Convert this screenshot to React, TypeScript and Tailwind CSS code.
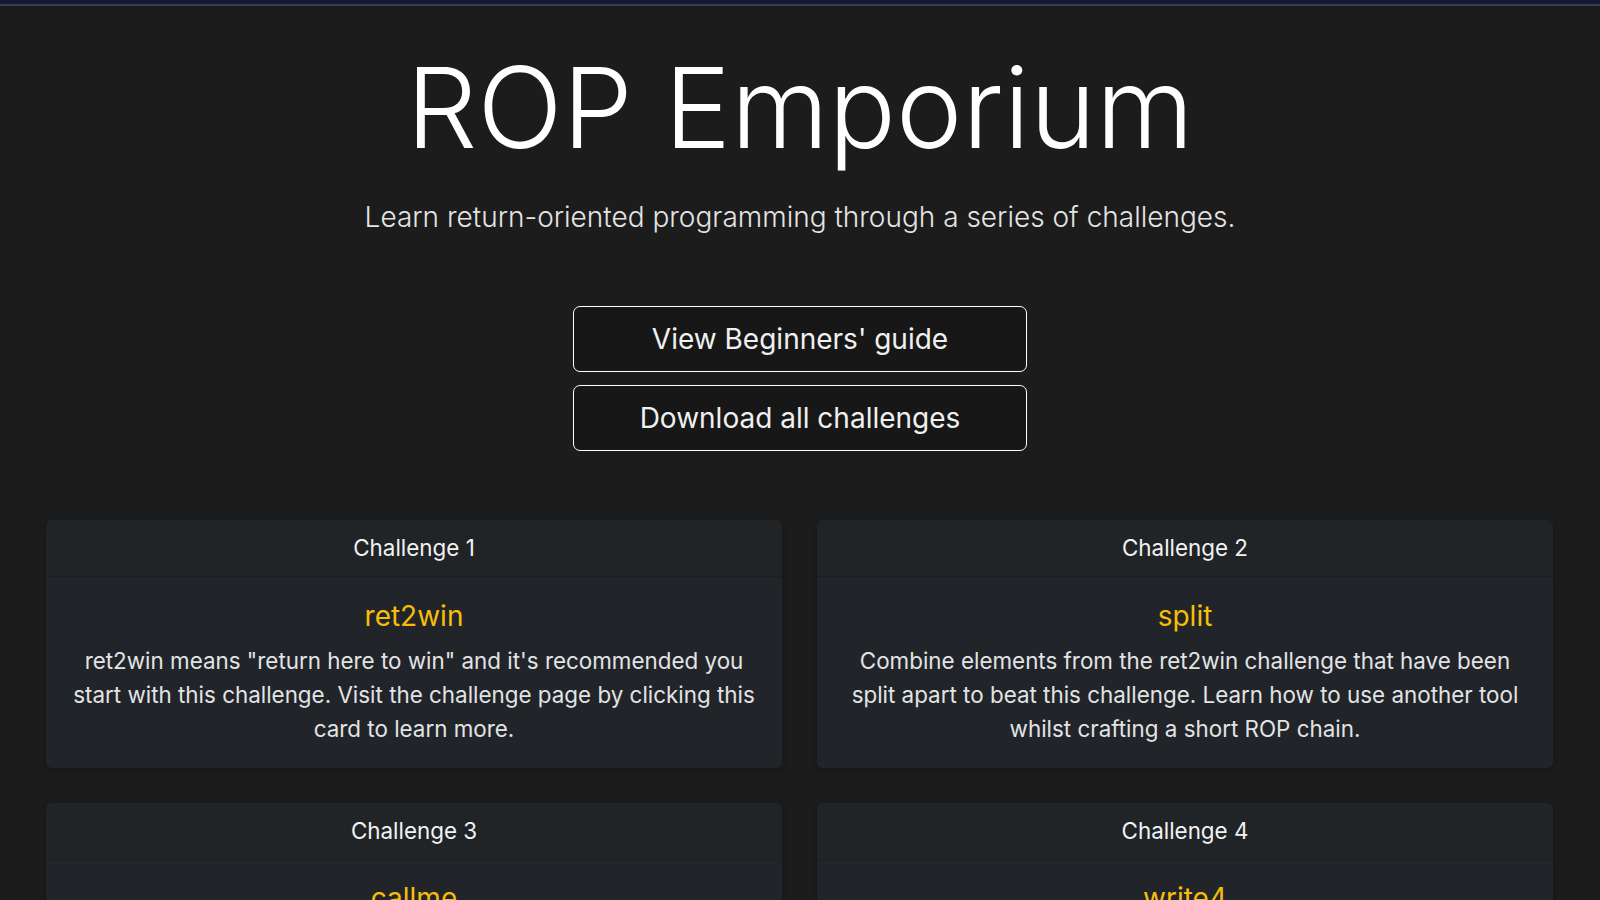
import React from "react";

const cards = [
  {
    n: 1,
    title: "ret2win",
    desc: "ret2win means \"return here to win\" and it's recommended you start with this challenge. Visit the challenge page by clicking this card to learn more.",
  },
  {
    n: 2,
    title: "split",
    desc: "Combine elements from the ret2win challenge that have been split apart to beat this challenge. Learn how to use another tool whilst crafting a short ROP chain.",
  },
  {
    n: 3,
    title: "callme",
    desc: "Reliably make consecutive calls to imported functions. Use some new techniques and learn about the Procedure Linkage Table.",
  },
  {
    n: 4,
    title: "write4",
    desc: "Our first foray into proper gadget use. A useful function is still present, but we'll need to write a string into memory somehow.",
  },
  {
    n: 5,
    title: "badchars",
    desc: "Learn to deal with \"bad characters\" that break your ROP chain. Some of the techniques you learn here will be useful in later challenges.",
  },
  {
    n: 6,
    title: "fluff",
    desc: "Sort the useful gadgets from the fluff to construct another write primitive in this challenge. You'll have to get creative though.",
  },
];

export default function App() {
  return (
    <div
      className="min-h-screen bg-[#1c1c1c] text-white"
      style={{ fontFamily: "Inter, 'Noto Sans', sans-serif" }}
    >
      <div className="h-[4px] bg-[#17173a]" />
      <div className="h-[2px] bg-[#3a3d44]" />
      <div className="flex flex-col items-center">
        <h1 className="mt-[34px] text-[112px] font-light leading-[1.2] text-white">
          ROP Emporium
        </h1>
        <p className="mt-[22px] text-[28px] font-light leading-[1.5] text-[#e4e4e4]">
          Learn return-oriented programming through a series of challenges.
        </p>
        <div className="mt-[68px] flex w-[454px] flex-col gap-[13px]">
          <button className="h-[66px] w-full rounded-[7px] border border-white bg-[#171717] text-[28px] text-[#f0f0f0]">
            View Beginners' guide
          </button>
          <button className="h-[66px] w-full rounded-[7px] border border-white bg-[#171717] text-[28px] text-[#f0f0f0]">
            Download all challenges
          </button>
        </div>
      </div>
      <div className="mt-[69px] grid grid-cols-2 gap-x-[35px] gap-y-[35px] pl-[46px] pr-[47px] pb-10">
        {cards.map((c) => (
          <div
            key={c.n}
            className="overflow-hidden rounded-[6px] bg-[#212529] text-center shadow-[0_2px_6px_rgba(0,0,0,0.25)]"
          >
            <div className="h-[57px] border-b border-[#1c1f22] bg-[#202427] text-[22.4px] leading-[56px] text-[#f2f2f2]">
              Challenge {c.n}
            </div>
            <div className="px-[22px] pt-[22.4px] pb-[22.4px]">
              <h5 className="text-[28px] leading-[1.2] text-[#f8bd07]">{c.title}</h5>
              <p className="mt-[11px] text-[22.4px] leading-[1.5] text-[#e2e3e5]">{c.desc}</p>
            </div>
          </div>
        ))}
      </div>
    </div>
  );
}
